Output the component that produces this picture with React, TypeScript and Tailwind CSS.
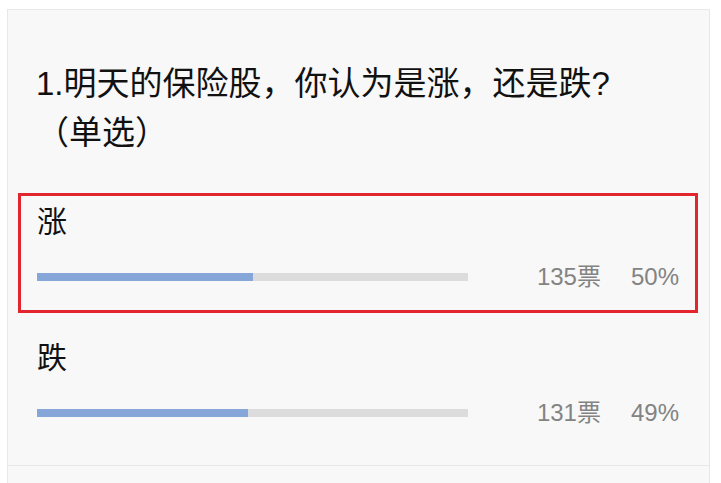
const options = [
  { label: "涨", votes: 135, pct: 50, selected: true },
  { label: "跌", votes: 131, pct: 49, selected: false },
]

function OptionRow({ label, votes, pct, selected }: { label: string; votes: number; pct: number; selected: boolean }) {
  return (
    <div
      className={`ml-[10px] mr-[11px] h-[120px] border-[3px] pl-[16px] pr-[16px] pt-[8px] ${
        selected ? "border-[#e3262d]" : "border-transparent"
      }`}
    >
      <div className="text-[30px] leading-[36px] text-[#111]">{label}</div>
      <div className="mt-[22px] flex h-[30px] items-center">
        <div className="h-[8px] w-[431px] bg-[#dcdcdc]">
          <div className="h-full bg-[#86a6d9]" style={{ width: `${pct}%` }} />
        </div>
        <div className="ml-auto flex items-center gap-[30px] text-[24px] text-[#838383]">
          <span>{votes}票</span>
          <span>{pct}%</span>
        </div>
      </div>
    </div>
  )
}

export default function App() {
  return (
    <div
      className="h-[483px] w-[721px] overflow-hidden bg-white pl-[7px] pr-[11px] pt-[9px]"
      style={{ fontFamily: '"Liberation Sans", "Noto Sans CJK SC", sans-serif' }}
    >
      <div className="border border-[#e8e8e8] bg-[#f8f8f8] pb-[16px]">
        <div className="pl-[28px] pr-[20px] pt-[49px] text-[33px] leading-[49px] text-[#111]">
          <div>1.明天的保险股，你认为是涨，还是跌?</div>
          <div>（单选）</div>
        </div>
        <div className="mt-[36px] flex flex-col gap-[16px]">
          {options.map((o) => (
            <OptionRow key={o.label} {...o} />
          ))}
        </div>
      </div>
      <div className="h-[40px] border-x border-b border-[#e8e8e8] bg-[#f8f8f8]" />
    </div>
  )
}
